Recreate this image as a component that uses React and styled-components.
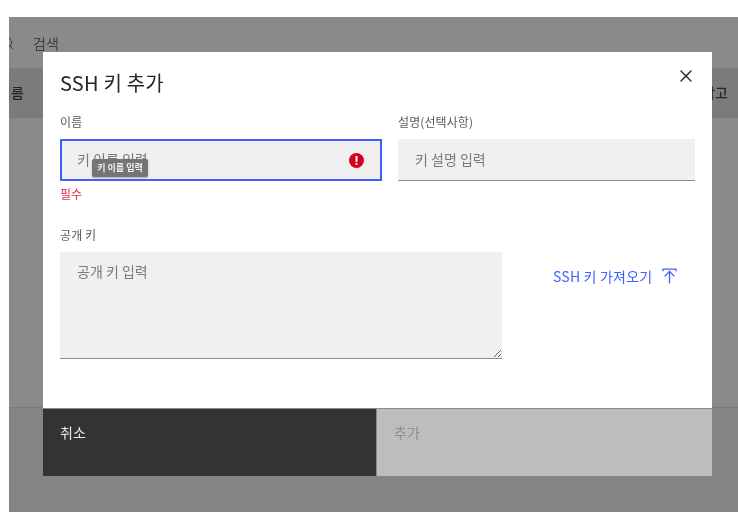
import React from 'react';
import styled, { createGlobalStyle } from 'styled-components';
import { X, Search } from 'lucide-react';

const GlobalStyle = createGlobalStyle`
  html, body {
    margin: 0;
    height: 100%;
    background: #fff;
    overflow: hidden;
  }
  * {
    box-sizing: border-box;
    font-family: "Noto Sans CJK KR", "Noto Sans", sans-serif;
  }
`;

const Page = styled.div`
  width: 738px;
  height: 512px;
  padding: 17px 0 0 9px;
  filter: blur(0.35px);
`;

const Backdrop = styled.div`
  position: relative;
  height: 495px;
  overflow: hidden;
  background: #8a8a8a;
`;

const SearchRow = styled.div`
  display: flex;
  align-items: center;
  gap: 18px;
  height: 51px;
  margin-left: -10px;
  padding-top: 1px;
  font-size: 14px;
  color: #3e3e3e;
`;

const TableHead = styled.div`
  display: flex;
  justify-content: space-between;
  align-items: center;
  height: 50px;
  padding: 0 10px 2px 0;
  font-size: 14px;
  font-weight: 500;
  color: #262626;
  background: #7b7b7b;
`;

const ClippedName = styled.span`
  margin-left: -11px;
`;

const TableBody = styled.div`
  height: 290px;
  border-bottom: 1px solid #7a7a7a;
`;

const TableFoot = styled.div`
  height: 104px;
  background: #848484;
`;

const Modal = styled.div`
  position: absolute;
  left: 34px;
  top: 35px;
  display: flex;
  flex-direction: column;
  width: 669px;
  height: 424px;
  background: #fff;
`;

const ModalBody = styled.div`
  flex: 1;
  padding: 17px 17px 0;
`;

const TitleRow = styled.div`
  display: flex;
  justify-content: space-between;
  align-items: flex-start;
  height: 43px;
`;

const Title = styled.h2`
  margin: 0;
  font-size: 20px;
  line-height: 28px;
  font-weight: 400;
  letter-spacing: 0.2px;
  color: #262626;
`;

const CloseButton = styled.button`
  display: flex;
  margin: -3px -1px 0 0;
  padding: 0;
  border: none;
  background: none;
  color: #262626;
`;

const FieldRow = styled.div`
  display: flex;
  gap: 16px;
  height: 98px;
`;

const Field = styled.div`
  width: ${(p) => p.$width}px;
`;

const Label = styled.label`
  display: block;
  height: 18px;
  margin-top: 1px;
  margin-bottom: 8px;
  font-size: 12px;
  line-height: 18px;
  letter-spacing: 0.1px;
  color: #5a5a5a;
`;

const InputWrap = styled.div`
  position: relative;
  height: 42px;
`;

const TextInput = styled.input`
  display: block;
  width: 100%;
  height: 100%;
  padding: 0 40px 2px ${(p) => (p.$invalid ? '15px' : '17px')};
  border: none;
  border-bottom: 1px solid #8d8d8d;
  border-radius: 0;
  outline: none;
  background: #f0f0f0;
  font-size: 14px;
  color: #161616;

  ${(p) => p.$invalid && 'border: 2px solid #3f5fff;'}

  &::placeholder {
    color: #7a7a7a;
    opacity: 1;
  }
`;

const ErrorIcon = styled.svg`
  position: absolute;
  right: 18px;
  top: 14px;
  width: 15px;
  height: 15px;
`;

const Tooltip = styled.div`
  position: absolute;
  left: 32px;
  top: 20px;
  width: 56px;
  height: 18px;
  border-radius: 2px;
  background: #757575;
  box-shadow: 0 1px 2px rgba(0, 0, 0, 0.3);
  font-size: 9px;
  font-weight: 700;
  line-height: 18px;
  text-align: center;
  white-space: nowrap;
  color: #f4f4f4;
`;

const ErrorText = styled.div`
  margin-top: 4px;
  font-size: 12px;
  line-height: 18px;
  color: #e0304a;
`;

const KeyRow = styled.div`
  display: flex;
  align-items: flex-start;
  margin-top: 15px;
`;

const KeyField = styled.div`
  width: 442px;
`;

const KeyInput = styled.textarea`
  display: block;
  width: 100%;
  height: 107px;
  padding: 10px 17px;
  border: none;
  border-bottom: 1px solid #8d8d8d;
  border-radius: 0;
  outline: none;
  background: #f0f0f0;
  font-size: 14px;
  line-height: 18px;
  color: #161616;

  &::placeholder {
    color: #7a7a7a;
    opacity: 1;
  }
`;

const ImportLink = styled.a`
  display: flex;
  align-items: center;
  gap: 10px;
  margin: 41px 0 0 51px;
  font-size: 14px;
  line-height: 20px;
  letter-spacing: 0.2px;
  white-space: nowrap;
  color: #3f5fff;
`;

const Footer = styled.div`
  display: flex;
  gap: 1px;
  height: 68px;
  padding-top: 1px;
  background: #8a8a8a;
`;

const FooterButton = styled.button`
  flex: ${(p) => (p.$primary ? '0 0 335px' : '0 0 333px')};
  display: flex;
  align-items: flex-start;
  padding: 13px 17px 0;
  border: none;
  border-radius: 0;
  font-size: 14px;
  line-height: 20px;
  background: ${(p) => (p.$primary ? '#bdbdbd' : '#333333')};
  color: ${(p) => (p.$primary ? '#8e8e8e' : '#e8e8e8')};
`;

const App = () => {
  return (
    <Page>
      <GlobalStyle />
      <Backdrop>
        <SearchRow>
          <Search size={16} strokeWidth={1.5} color="#3e3e3e" />
          <span>검색</span>
        </SearchRow>
        <TableHead>
          <ClippedName>이름</ClippedName>
          <span>참고</span>
        </TableHead>
        <TableBody />
        <TableFoot />
        <Modal>
          <ModalBody>
            <TitleRow>
              <Title>SSH 키 추가</Title>
              <CloseButton aria-label="닫기">
                <X size={20} strokeWidth={1.6} />
              </CloseButton>
            </TitleRow>
            <FieldRow>
              <Field $width={322}>
                <Label>이름</Label>
                <InputWrap>
                  <TextInput $invalid placeholder="키 이름 입력" />
                  <ErrorIcon viewBox="0 0 16 16">
                    <circle cx="8" cy="8" r="8" fill="#d0021b" />
                    <rect x="7" y="3.2" width="2" height="6.2" fill="#fff" />
                    <rect x="7" y="10.6" width="2" height="2" fill="#fff" />
                  </ErrorIcon>
                  <Tooltip>키 이름 입력</Tooltip>
                </InputWrap>
                <ErrorText>필수</ErrorText>
              </Field>
              <Field $width={297}>
                <Label>설명(선택사항)</Label>
                <InputWrap>
                  <TextInput placeholder="키 설명 입력" />
                </InputWrap>
              </Field>
            </FieldRow>
            <KeyRow>
              <KeyField>
                <Label>공개 키</Label>
                <KeyInput placeholder="공개 키 입력" />
              </KeyField>
              <ImportLink>
                SSH 키 가져오기
                <svg width="15" height="16" viewBox="0 0 15 16" fill="none" stroke="currentColor" strokeWidth="1.3">
                  <path d="M1 3.2V1.2h13v2" />
                  <path d="M7.5 15.5V3.5" />
                  <path d="M2.6 8.4l4.9-4.9 4.9 4.9" />
                </svg>
              </ImportLink>
            </KeyRow>
          </ModalBody>
          <Footer>
            <FooterButton>취소</FooterButton>
            <FooterButton $primary>추가</FooterButton>
          </Footer>
        </Modal>
      </Backdrop>
    </Page>
  );
};

export default App;
